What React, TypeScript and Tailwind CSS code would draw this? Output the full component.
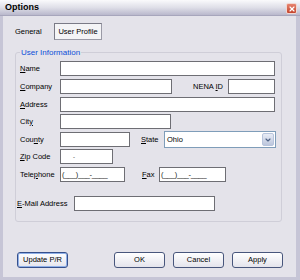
import { ChevronDown, X } from "lucide-react";

const font = "font-['Liberation_Sans',Arial,sans-serif]";

function Key({ children }: { children: string }) {
  return <span className="underline underline-offset-[1px]">{children}</span>;
}

function Field({ w, children }: { w: string; children?: React.ReactNode }) {
  return (
    <div className={`${w} h-[15px] bg-white border border-[#6e6e74] flex items-center text-[#222]`}>
      {children}
    </div>
  );
}

function Btn({ label, focus }: { label: string; focus?: boolean }) {
  return (
    <div
      className={`w-[51px] h-[16px] rounded-[3px] border flex items-center justify-center bg-gradient-to-b from-white to-[#e4e4ec] text-black ${
        focus ? "border-[#36508c] shadow-[inset_0_0_0_1px_#8fb0e8]" : "border-[#48567c]"
      }`}
    >
      {label}
    </div>
  );
}

export default function App() {
  return (
    <div className={`w-[300px] h-[280px] flex flex-col bg-[#e4e3ea] text-[7.5px] leading-none text-black ${font}`}>
      {/* title bar */}
      <div className="h-[16px] flex items-center justify-between pl-[5px] pr-[3px] bg-gradient-to-b from-[#fafafc] via-[#dfdfe8] to-[#b9b8cc] border-b border-[#a7a6bc]">
        <span className="font-bold text-[9px] text-black">Options</span>
        <div className="w-[11px] h-[11px] mt-[2px] rounded-[2px] border border-[#f2d6d0] bg-gradient-to-b from-[#e6836f] to-[#c4432c] flex items-center justify-center">
          <X size={8} strokeWidth={3.5} className="text-white" />
        </div>
      </div>

      {/* body */}
      <div className="flex-1 flex flex-col border-l-[3px] border-r-[4px] border-b-[3px] border-[#c6c5d6]">
        {/* tabs */}
        <div className="mt-[7px] h-[17px] flex items-center">
          <span className="ml-[12px] w-[39px]">General</span>
          <div className="w-[48px] h-[17px] flex items-center justify-center bg-[#f4f4f6] border border-[#9a9aa6] border-t-[#7a7a86] border-l-[#7a7a86]">
            User Profile
          </div>
        </div>

        {/* group box */}
        <div className="relative mt-[12px] ml-[12px] w-[267px] h-[170px] rounded-[3px] border border-[#cfced8] flex flex-col pl-[4px]">
          <span className="absolute -top-[5px] left-[4px] px-[1px] bg-[#e4e3ea] text-[#0b4fd8] text-[8px] leading-[9px]">
            User Information
          </span>

          <div className="mt-[8px] h-[15px] flex items-center">
            <span className="w-[40px]"><Key>N</Key>ame</span>
            <Field w="w-[215px]" />
          </div>

          <div className="mt-[3px] h-[15px] flex items-center">
            <span className="w-[40px]"><Key>C</Key>ompany</span>
            <Field w="w-[112px]" />
            <span className="ml-[21px] w-[35px]">NENA <Key>I</Key>D</span>
            <Field w="w-[47px]" />
          </div>

          <div className="mt-[3px] h-[15px] flex items-center">
            <span className="w-[40px]"><Key>A</Key>ddress</span>
            <Field w="w-[215px]" />
          </div>

          <div className="mt-[2px] h-[15px] flex items-center">
            <span className="w-[40px]">Cit<Key>y</Key></span>
            <Field w="w-[111px]" />
          </div>

          <div className="mt-[3px] h-[15px] flex items-center">
            <span className="w-[40px]">Cou<Key>n</Key>ty</span>
            <Field w="w-[70px]" />
            <span className="ml-[11px] w-[23px]"><Key>S</Key>tate</span>
            <div className="w-[112px] h-[17px] bg-white border border-[#7f9db9] flex items-center justify-between pl-[2px] pr-[1px]">
              <span>Ohio</span>
              <div className="w-[12px] h-[13px] rounded-[2px] bg-gradient-to-b from-[#e8ecf6] to-[#bcc6dc] border border-[#b7c4dc] flex items-center justify-center">
                <ChevronDown size={8} strokeWidth={3.5} className="text-[#4d6185]" />
              </div>
            </div>
          </div>

          <div className="mt-[2px] h-[15px] flex items-center">
            <span className="w-[40px]"><Key>Z</Key>ip Code</span>
            <Field w="w-[53px]">
              <span className="ml-[12px] text-[6px]">-</span>
            </Field>
          </div>

          <div className="mt-[3px] h-[15px] flex items-center">
            <span className="w-[40px]">Tele<Key>p</Key>hone</span>
            <Field w="w-[65px]">
              <span className="ml-[1px] tracking-[-0.3px]">(___)___-____</span>
            </Field>
            <span className="ml-[17px] w-[17px]"><Key>F</Key>ax</span>
            <Field w="w-[67px]">
              <span className="ml-[1px] tracking-[-0.3px]">(___)___-____</span>
            </Field>
          </div>

          <div className="mt-[14px] h-[15px] flex items-center -ml-[3px]">
            <span className="w-[57px]"><Key>E</Key>-Mail Address</span>
            <Field w="w-[141px]" />
          </div>
        </div>

        {/* buttons */}
        <div className="mt-[30px] h-[16px] flex items-center pl-[14px] pr-[13px]">
          <Btn label="Update P/R" focus />
          <div className="flex-1" />
          <div className="flex gap-[8px]">
            <Btn label="OK" />
            <Btn label="Cancel" />
            <Btn label="Apply" />
          </div>
        </div>
      </div>
    </div>
  );
}
